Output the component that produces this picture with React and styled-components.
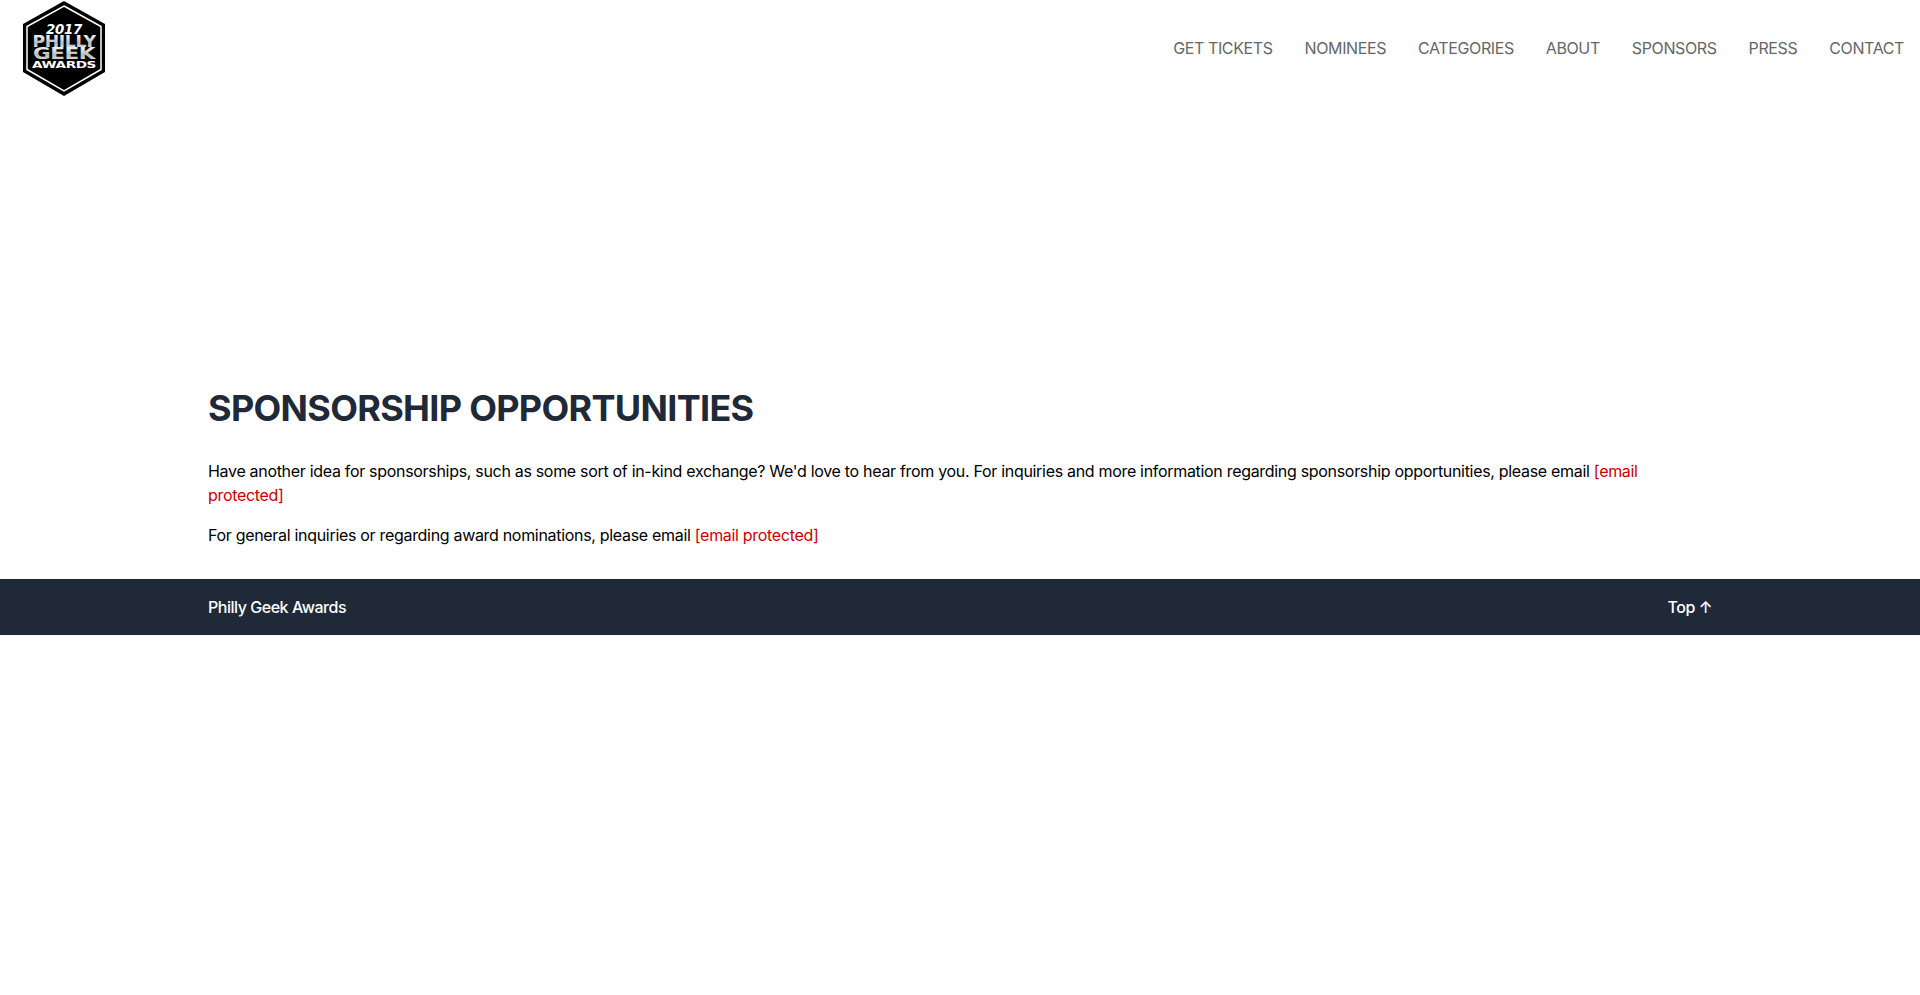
import React from "react"
import styled, { createGlobalStyle } from "styled-components"

const GlobalStyle = createGlobalStyle`
  body {
    margin: 0;
    background: #fff;
    font-family: Inter, "Liberation Sans", sans-serif;
    font-size: 16px;
    line-height: 24px;
    letter-spacing: -0.31px;
    color: #000;
  }
`

const Header = styled.header`
  height: 96px;
  display: flex;
  align-items: center;
  justify-content: space-between;
  padding: 0 16px 0 22px;
`

const LogoLink = styled.a`
  display: block;
  width: 84px;
  height: 96px;
`

const Nav = styled.nav`
  display: flex;
  gap: 32px;
`

const NavLink = styled.a`
  color: #666;
  text-decoration: none;
  text-transform: uppercase;
  font-size: 16px;
  letter-spacing: -0.39px;
`

const Main = styled.main`
  width: 1504px;
  margin: 0 auto;
  padding: 292px 0 32px;
`

const Title = styled.h1`
  margin: 0 0 31px;
  color: #1f2937;
  font-size: 36px;
  line-height: 40px;
  font-weight: 700;
  letter-spacing: -0.69px;
  text-transform: uppercase;
`

const Paragraph = styled.p`
  margin: 0 0 16px;
  &:last-child {
    margin-bottom: 0;
  }
`

const EmailLink = styled.a`
  color: #c00;
  text-decoration: none;
`

const Footer = styled.footer`
  background: #1f2937;
  color: #fff;
`

const FooterInner = styled.div`
  width: 1504px;
  height: 56px;
  margin: 0 auto;
  display: flex;
  align-items: center;
  justify-content: space-between;
  font-weight: 500;
  letter-spacing: -0.47px;
`

const TopLink = styled.a`
  color: #fff;
  text-decoration: none;
`

const Logo = () => (
  <svg viewBox="0 0 84 96" width="84" height="96">
    <defs>
      <linearGradient id="metal" x1="0" y1="0" x2="0" y2="1">
        <stop offset="0" stopColor="#fff" />
        <stop offset="0.55" stopColor="#bbb" />
        <stop offset="1" stopColor="#eee" />
      </linearGradient>
    </defs>
    <polygon points="42,1 83,24 83,72 42,96 1,72 1,24" fill="#000" />
    <polygon
      points="42,6 79,26.500 79,69.500 42,91 5,69.500 5,26.500"
      fill="none"
      stroke="#fff"
      strokeWidth="1.500"
    />
    <g fontFamily="DejaVu Sans, sans-serif" fontWeight="700" textAnchor="middle">
      <text x="42" y="34" fontSize="14" fontStyle="italic" fill="#fff" textLength="36" lengthAdjust="spacingAndGlyphs">2017</text>
      <text x="42" y="47" fontSize="15" fill="url(#metal)" textLength="63" lengthAdjust="spacingAndGlyphs">PHILLY</text>
      <text x="42" y="59" fontSize="15" fill="url(#metal)" textLength="62" lengthAdjust="spacingAndGlyphs">GEEK</text>
      <text x="42" y="68" fontSize="9.500" fill="#fff" textLength="64" lengthAdjust="spacingAndGlyphs">AWARDS</text>
    </g>
  </svg>
)

const links = ["Get Tickets", "Nominees", "Categories", "About", "Sponsors", "Press", "Contact"]

const App = () => {
  return (
    <>
      <GlobalStyle />
      <Header>
        <LogoLink href="#">
          <Logo />
        </LogoLink>
        <Nav>
          {links.map(link => (
            <NavLink href="#" key={link}>
              {link}
            </NavLink>
          ))}
        </Nav>
      </Header>
      <Main>
        <Title>Sponsorship Opportunities</Title>
        <Paragraph>
          Have another idea for sponsorships, such as some sort of in-kind exchange? We'd love to hear from you. For
          inquiries and more information regarding sponsorship opportunities, please email{" "}
          <EmailLink href="#">[email protected]</EmailLink>
        </Paragraph>
        <Paragraph>
          For general inquiries or regarding award nominations, please email{" "}
          <EmailLink href="#">[email protected]</EmailLink>
        </Paragraph>
      </Main>
      <Footer>
        <FooterInner>
          <span>Philly Geek Awards</span>
          <TopLink href="#">Top ↑</TopLink>
        </FooterInner>
      </Footer>
    </>
  )
}

export default App
